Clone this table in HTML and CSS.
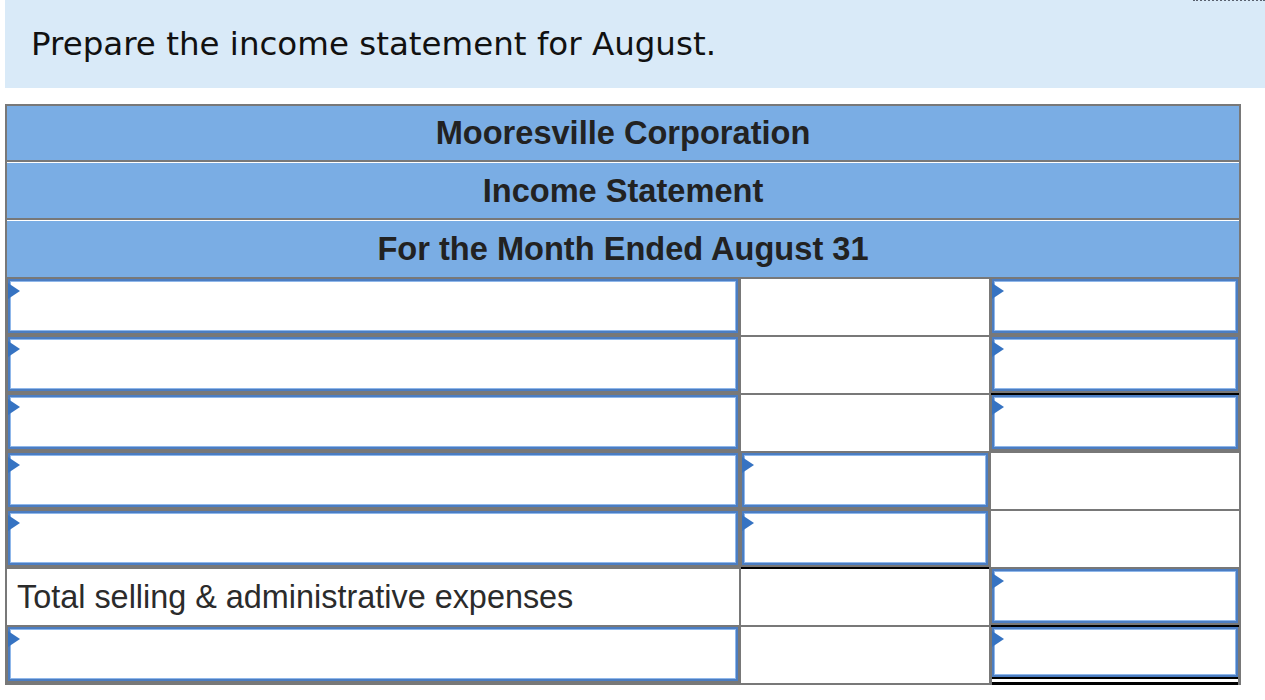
FILE: index.html
```html
<!DOCTYPE html>
<html lang="en">
<head>
<meta charset="utf-8">
<title>Income statement</title>
<link rel="stylesheet" href="styles.css">
</head>
<body>
<div class="page">
  <div class="prompt">Prepare the income statement for August.</div>
  <div class="sheet">
    <div class="hd">Mooresville Corporation</div>
    <div class="hd">Income Statement</div>
    <div class="hd hd-last">For the Month Ended August 31</div>

    <div class="cell ic"><div class="inp"></div></div>
    <div class="cell plain"></div>
    <div class="cell ic"><div class="inp"></div></div>

    <div class="cell ic"><div class="inp"></div></div>
    <div class="cell plain"></div>
    <div class="cell ic"><div class="inp"></div></div>

    <div class="cell ic"><div class="inp"></div></div>
    <div class="cell plain"></div>
    <div class="cell ic topblack"><div class="inp"></div></div>

    <div class="cell ic"><div class="inp"></div></div>
    <div class="cell ic"><div class="inp"></div></div>
    <div class="cell plain"></div>

    <div class="cell ic"><div class="inp"></div></div>
    <div class="cell ic"><div class="inp"></div></div>
    <div class="cell plain"></div>

    <div class="cell plain label">Total selling &amp; administrative expenses</div>
    <div class="cell plain topblack"></div>
    <div class="cell ic"><div class="inp"></div></div>

    <div class="cell ic"><div class="inp"></div></div>
    <div class="cell plain"></div>
    <div class="cell ic topblack dbl"><div class="inp"></div></div>
  </div>
</div>
</body>
</html>
```

FILE: styles.css
```css
html, body {
  margin: 0;
  padding: 0;
  background: #ffffff;
}

.page {
  padding-left: 5px;
  overflow: hidden;
}

.prompt {
  position: relative;
  height: 88px;
  display: flex;
  align-items: center;
  padding-left: 26px;
  background: #d9eaf8;
  font-family: "DejaVu Sans", Verdana, sans-serif;
  font-size: 32.5px;
  color: #111111;
}

.prompt::before {
  content: "";
  position: absolute;
  top: -1px;
  right: 0;
  width: 72px;
  border-top: 2px dotted #5a6270;
}

.sheet {
  margin-top: 16px;
  display: grid;
  grid-template-columns: 732px 248px 248px;
  gap: 2px;
  padding: 2px;
  width: 1232px;
  background: #787878;
}

.hd {
  grid-column: 1 / -1;
  height: 54px;
  display: flex;
  align-items: center;
  justify-content: center;
  background: #7aade4;
  font-family: "Liberation Sans", Arial, sans-serif;
  font-weight: bold;
  font-size: 32.6px;
  color: #222222;
}

.hd + .hd {
  height: 55px;
  border-top: 1px solid #ffffff;
}

.hd.hd-last {
  height: 56px;
}

.cell {
  height: 56px;
  box-sizing: border-box;
}

.plain {
  background: #ffffff;
}

.ic {
  padding: 0 1px 2px 1px;
  background: #787878;
}

.inp {
  position: relative;
  height: 100%;
  box-sizing: border-box;
  border: 2px solid #4b7dc2;
  background: #ffffff;
  box-shadow: inset 0 0 0 1px #8fb7ea;
}

.inp::before {
  content: "";
  position: absolute;
  left: -2px;
  top: 2px;
  width: 0;
  height: 0;
  border-left: 12px solid #3673c2;
  border-top: 8px solid transparent;
  border-bottom: 8px solid transparent;
}

.topblack {
  box-shadow: 0 -2px 0 0 #000000;
}

.dbl .inp {
  height: calc(100% - 4px);
  box-shadow: inset 0 0 0 1px #8fb7ea, 0 2px 0 0 #000000, 0 5px 0 0 #ffffff, 0 8px 0 0 #000000;
}

.label {
  display: flex;
  align-items: center;
  padding-left: 10px;
  font-family: "Liberation Sans", Arial, sans-serif;
  font-size: 32.4px;
  color: #2b2b2b;
}
```
